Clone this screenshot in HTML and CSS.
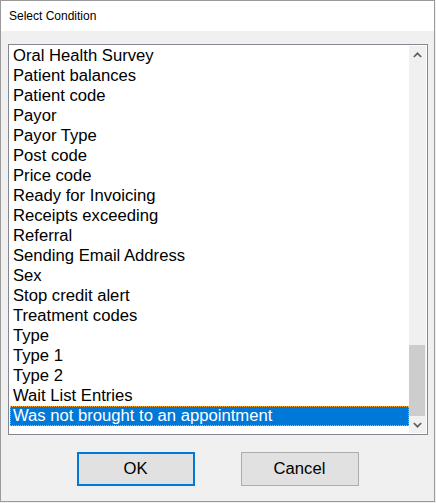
FILE: index.html
```html
<!DOCTYPE html>
<html>
<head>
<meta charset="utf-8">
<title>Select Condition</title>
<link rel="stylesheet" href="styles.css">
</head>
<body>
<div class="dialog">
  <div class="titlebar">Select Condition</div>
  <div class="content">
    <div class="listbox">
      <ul class="items">
        <li>Oral Health Survey</li>
        <li>Patient balances</li>
        <li>Patient code</li>
        <li>Payor</li>
        <li>Payor Type</li>
        <li>Post code</li>
        <li>Price code</li>
        <li>Ready for Invoicing</li>
        <li>Receipts exceeding</li>
        <li>Referral</li>
        <li>Sending Email Address</li>
        <li>Sex</li>
        <li>Stop credit alert</li>
        <li>Treatment codes</li>
        <li>Type</li>
        <li>Type 1</li>
        <li>Type 2</li>
        <li>Wait List Entries</li>
        <li class="selected">Was not brought to an appointment</li>
      </ul>
      <div class="scrollbar">
        <div class="sb-btn">
          <svg width="9" height="6" viewBox="0 0 9 6"><polyline points="0.8,5 4.5,1.3 8.2,5" fill="none" stroke="#606060" stroke-width="1.7"/></svg>
        </div>
        <div class="sb-track"><div class="sb-thumb"></div></div>
        <div class="sb-btn">
          <svg width="9" height="6" viewBox="0 0 9 6"><polyline points="0.8,1 4.5,4.7 8.2,1" fill="none" stroke="#606060" stroke-width="1.7"/></svg>
        </div>
      </div>
    </div>
    <div class="buttons">
      <button class="btn default">OK</button>
      <button class="btn">Cancel</button>
    </div>
  </div>
</div>
</body>
</html>
```
FILE: styles.css
```css
html, body {
  margin: 0;
  padding: 0;
  background: #f0f0f0;
}
body {
  width: 436px;
  height: 503px;
  overflow: hidden;
}
.dialog {
  box-sizing: border-box;
  width: 435px;
  height: 502px;
  border: 1px solid #9a9a9a;
  background: #f0f0f0;
  display: flex;
  flex-direction: column;
}
.titlebar {
  height: 30px;
  line-height: 30px;
  background: #ffffff;
  padding-left: 8px;
  font-family: "Liberation Sans", Arial, sans-serif;
  font-size: 12px;
  color: #000;
}
.content {
  flex: 1;
  display: flex;
  flex-direction: column;
  padding: 13px 7px 0 7px;
}
.listbox {
  box-sizing: border-box;
  width: 420px;
  height: 391px;
  border: 1px solid #828790;
  padding: 1px;
  background: #ffffff;
  display: flex;
}
.items {
  flex: 1;
  margin: 0;
  padding: 0;
  list-style: none;
  overflow: hidden;
  font-family: "Liberation Sans", Arial, sans-serif;
  font-size: 16.65px;
  color: #000;
}
.items li {
  height: 20px;
  line-height: 20px;
  padding-left: 3px;
  white-space: nowrap;
}
.items li.selected {
  background: #0078d7;
  color: #ffffff;
  outline: 1px dotted #f7a431;
  outline-offset: -1px;
}
.scrollbar {
  width: 17px;
  display: flex;
  flex-direction: column;
  background: #f0f0f0;
}
.sb-btn {
  height: 17px;
  display: flex;
  align-items: center;
  justify-content: center;
}
.sb-track {
  flex: 1;
  display: flex;
  flex-direction: column;
  justify-content: flex-end;
}
.sb-thumb {
  height: 71px;
  margin: 0 1px 0 0;
  background: #cdcdcd;
}
.buttons {
  display: flex;
  justify-content: center;
  gap: 46px;
  margin-top: 17px;
}
.btn {
  box-sizing: border-box;
  width: 118px;
  height: 34px;
  padding: 0;
  background: #e1e1e1;
  border: 1px solid #adadad;
  font-family: "Liberation Sans", Arial, sans-serif;
  font-size: 16.65px;
  color: #000;
}
.btn.default {
  border: 2px solid #0078d7;
}
```
